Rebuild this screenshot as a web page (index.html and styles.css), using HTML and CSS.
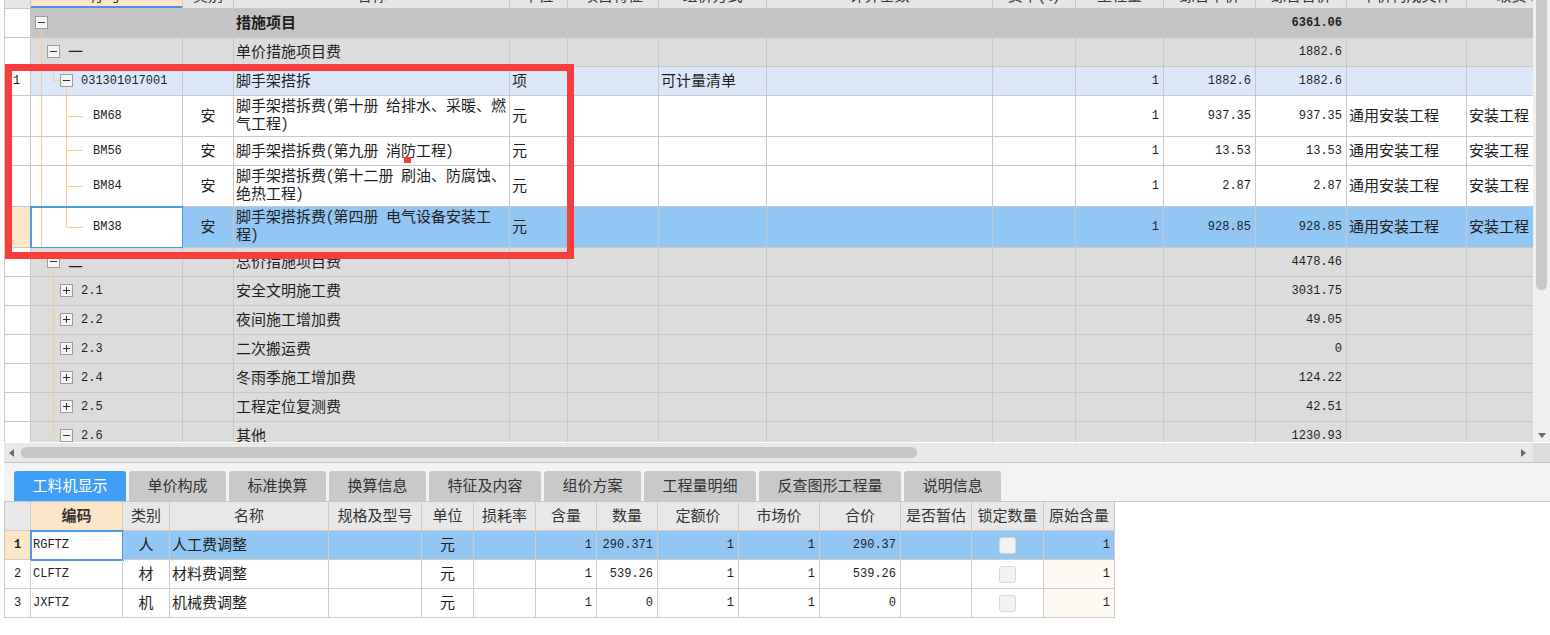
FILE: index.html
```html
<!DOCTYPE html>
<html lang="zh">
<head>
<meta charset="utf-8">
<title>措施项目</title>
<link rel="stylesheet" href="styles.css">
</head>
<body>
<div class="app">
  <div class="upper">
    <div class="view">
      <div class="sheet">
        <div class="row head">
          <div class="c"></div>
          <div class="c hl">序号</div>
          <div class="c">类别</div>
          <div class="c">名称</div>
          <div class="c">单位</div>
          <div class="c">项目特征</div>
          <div class="c">组价方式</div>
          <div class="c">计算基数</div>
          <div class="c">费率(%)</div>
          <div class="c">工程量</div>
          <div class="c">综合单价</div>
          <div class="c">综合合价</div>
          <div class="c">单价构成文件</div>
          <div class="c">取费专业</div>
        </div>

        <div class="row g0">
          <div class="c rn"></div>
          <div class="c code"><svg class="tree" width="30" height="28"><line x1="10.5" y1="19" x2="10.5" y2="28"/><use href="#bminus" x="4" y="7"/></svg></div>
          <div class="c"></div>
          <div class="c b">措施项目</div>
          <div class="c"></div><div class="c"></div><div class="c"></div><div class="c"></div><div class="c"></div><div class="c"></div><div class="c"></div>
          <div class="c num m b">6361.06</div>
          <div class="c"></div><div class="c"></div>
        </div>

        <div class="row g1">
          <div class="c rn"></div>
          <div class="c code"><svg class="tree" width="37" height="28"><line x1="10.5" y1="0" x2="10.5" y2="28"/><line x1="11" y1="13.5" x2="16" y2="13.5"/><line x1="22.5" y1="19" x2="22.5" y2="28"/><use href="#bminus" x="16" y="7"/></svg><span class="cj">一</span></div>
          <div class="c"></div>
          <div class="c">单价措施项目费</div>
          <div class="c"></div><div class="c"></div><div class="c"></div><div class="c"></div><div class="c"></div><div class="c"></div><div class="c"></div>
          <div class="c num m">1882.6</div>
          <div class="c"></div><div class="c"></div>
        </div>

        <div class="row lb">
          <div class="c rn m">1</div>
          <div class="c code"><svg class="tree" width="50" height="28"><line x1="10.5" y1="0" x2="10.5" y2="28"/><line x1="22.5" y1="0" x2="22.5" y2="13.5"/><line x1="23" y1="13.5" x2="29" y2="13.5"/><line x1="35.5" y1="19" x2="35.5" y2="28"/><use href="#bminus" x="29" y="7"/></svg><span class="m">031301017001</span></div>
          <div class="c"></div>
          <div class="c">脚手架搭拆</div>
          <div class="c">项</div>
          <div class="c"></div>
          <div class="c">可计量清单</div>
          <div class="c"></div><div class="c"></div>
          <div class="c num m">1</div>
          <div class="c num m">1882.6</div>
          <div class="c num m">1882.6</div>
          <div class="c"></div><div class="c"></div>
        </div>

        <div class="row tall wh">
          <div class="c rn"></div>
          <div class="c code"><svg class="tree" width="62" height="40"><line x1="10.5" y1="0" x2="10.5" y2="40"/><line x1="35.5" y1="0" x2="35.5" y2="40"/><line x1="36" y1="20.5" x2="52" y2="20.5"/></svg><span class="m">BM68</span></div>
          <div class="c ctr">安</div>
          <div class="c"><span class="two">脚手架搭拆费(第十册 给排水、采暖、燃<br>气工程)</span></div>
          <div class="c">元</div>
          <div class="c"></div><div class="c"></div><div class="c"></div><div class="c"></div>
          <div class="c num m">1</div>
          <div class="c num m">937.35</div>
          <div class="c num m">937.35</div>
          <div class="c">通用安装工程</div>
          <div class="c">安装工程</div>
        </div>

        <div class="row wh">
          <div class="c rn"></div>
          <div class="c code"><svg class="tree" width="62" height="28"><line x1="10.5" y1="0" x2="10.5" y2="28"/><line x1="35.5" y1="0" x2="35.5" y2="28"/><line x1="36" y1="13.5" x2="52" y2="13.5"/></svg><span class="m">BM56</span></div>
          <div class="c ctr">安</div>
          <div class="c">脚手架搭拆费(第九册 消防工程)</div>
          <div class="c">元</div>
          <div class="c"></div><div class="c"></div><div class="c"></div><div class="c"></div>
          <div class="c num m">1</div>
          <div class="c num m">13.53</div>
          <div class="c num m">13.53</div>
          <div class="c">通用安装工程</div>
          <div class="c">安装工程</div>
        </div>

        <div class="row tall wh">
          <div class="c rn"></div>
          <div class="c code"><svg class="tree" width="62" height="40"><line x1="10.5" y1="0" x2="10.5" y2="40"/><line x1="35.5" y1="0" x2="35.5" y2="40"/><line x1="36" y1="20.5" x2="52" y2="20.5"/></svg><span class="m">BM84</span></div>
          <div class="c ctr">安</div>
          <div class="c"><span class="two">脚手架搭拆费(第十二册 刷油、防腐蚀、<br>绝热工程)</span></div>
          <div class="c">元</div>
          <div class="c"></div><div class="c"></div><div class="c"></div><div class="c"></div>
          <div class="c num m">1</div>
          <div class="c num m">2.87</div>
          <div class="c num m">2.87</div>
          <div class="c">通用安装工程</div>
          <div class="c">安装工程</div>
        </div>

        <div class="row tall sel">
          <div class="c rn"></div>
          <div class="c code edit"><svg class="tree" width="62" height="40"><line x1="10.5" y1="0" x2="10.5" y2="40"/><line x1="35.5" y1="0" x2="35.5" y2="20.5"/><line x1="36" y1="20.5" x2="52" y2="20.5"/></svg><span class="m">BM38</span></div>
          <div class="c ctr">安</div>
          <div class="c"><span class="two">脚手架搭拆费(第四册 电气设备安装工<br>程)</span></div>
          <div class="c">元</div>
          <div class="c"></div><div class="c"></div><div class="c"></div><div class="c"></div>
          <div class="c num m">1</div>
          <div class="c num m">928.85</div>
          <div class="c num m">928.85</div>
          <div class="c">通用安装工程</div>
          <div class="c">安装工程</div>
        </div>

        <div class="row g1">
          <div class="c rn"></div>
          <div class="c code"><svg class="tree" width="37" height="28"><line x1="10.5" y1="0" x2="10.5" y2="13.5"/><line x1="11" y1="13.5" x2="16" y2="13.5"/><line x1="22.5" y1="19" x2="22.5" y2="28"/><use href="#bminus" x="16" y="7"/></svg><span class="cj">二</span></div>
          <div class="c"></div>
          <div class="c">总价措施项目费</div>
          <div class="c"></div><div class="c"></div><div class="c"></div><div class="c"></div><div class="c"></div><div class="c"></div><div class="c"></div>
          <div class="c num m">4478.46</div>
          <div class="c"></div><div class="c"></div>
        </div>

        <div class="row g1">
          <div class="c rn"></div>
          <div class="c code"><svg class="tree" width="50" height="28"><line x1="22.5" y1="0" x2="22.5" y2="28"/><line x1="23" y1="13.5" x2="29" y2="13.5"/><use href="#bplus" x="29" y="7"/></svg><span class="m">2.1</span></div>
          <div class="c"></div>
          <div class="c">安全文明施工费</div>
          <div class="c"></div><div class="c"></div><div class="c"></div><div class="c"></div><div class="c"></div><div class="c"></div><div class="c"></div>
          <div class="c num m">3031.75</div>
          <div class="c"></div><div class="c"></div>
        </div>

        <div class="row g1">
          <div class="c rn"></div>
          <div class="c code"><svg class="tree" width="50" height="28"><line x1="22.5" y1="0" x2="22.5" y2="28"/><line x1="23" y1="13.5" x2="29" y2="13.5"/><use href="#bplus" x="29" y="7"/></svg><span class="m">2.2</span></div>
          <div class="c"></div>
          <div class="c">夜间施工增加费</div>
          <div class="c"></div><div class="c"></div><div class="c"></div><div class="c"></div><div class="c"></div><div class="c"></div><div class="c"></div>
          <div class="c num m">49.05</div>
          <div class="c"></div><div class="c"></div>
        </div>

        <div class="row g1">
          <div class="c rn"></div>
          <div class="c code"><svg class="tree" width="50" height="28"><line x1="22.5" y1="0" x2="22.5" y2="28"/><line x1="23" y1="13.5" x2="29" y2="13.5"/><use href="#bplus" x="29" y="7"/></svg><span class="m">2.3</span></div>
          <div class="c"></div>
          <div class="c">二次搬运费</div>
          <div class="c"></div><div class="c"></div><div class="c"></div><div class="c"></div><div class="c"></div><div class="c"></div><div class="c"></div>
          <div class="c num m">0</div>
          <div class="c"></div><div class="c"></div>
        </div>

        <div class="row g1">
          <div class="c rn"></div>
          <div class="c code"><svg class="tree" width="50" height="28"><line x1="22.5" y1="0" x2="22.5" y2="28"/><line x1="23" y1="13.5" x2="29" y2="13.5"/><use href="#bplus" x="29" y="7"/></svg><span class="m">2.4</span></div>
          <div class="c"></div>
          <div class="c">冬雨季施工增加费</div>
          <div class="c"></div><div class="c"></div><div class="c"></div><div class="c"></div><div class="c"></div><div class="c"></div><div class="c"></div>
          <div class="c num m">124.22</div>
          <div class="c"></div><div class="c"></div>
        </div>

        <div class="row g1">
          <div class="c rn"></div>
          <div class="c code"><svg class="tree" width="50" height="28"><line x1="22.5" y1="0" x2="22.5" y2="28"/><line x1="23" y1="13.5" x2="29" y2="13.5"/><use href="#bplus" x="29" y="7"/></svg><span class="m">2.5</span></div>
          <div class="c"></div>
          <div class="c">工程定位复测费</div>
          <div class="c"></div><div class="c"></div><div class="c"></div><div class="c"></div><div class="c"></div><div class="c"></div><div class="c"></div>
          <div class="c num m">42.51</div>
          <div class="c"></div><div class="c"></div>
        </div>

        <div class="row g1">
          <div class="c rn"></div>
          <div class="c code"><svg class="tree" width="50" height="28"><line x1="22.5" y1="0" x2="22.5" y2="13.5"/><line x1="23" y1="13.5" x2="29" y2="13.5"/><line x1="35.5" y1="19" x2="35.5" y2="28"/><use href="#bminus" x="29" y="7"/></svg><span class="m">2.6</span></div>
          <div class="c"></div>
          <div class="c">其他</div>
          <div class="c"></div><div class="c"></div><div class="c"></div><div class="c"></div><div class="c"></div><div class="c"></div><div class="c"></div>
          <div class="c num m">1230.93</div>
          <div class="c"></div><div class="c"></div>
        </div>
      </div>
      <div class="annot"></div>
      <div class="caret"></div>
    </div>
    <div class="vscroll">
      <div class="vthumb"></div>
      <div class="arr-down"></div>
    </div>
  </div>

  <div class="hscroll">
    <div class="arr-left"></div>
    <div class="hthumb"></div>
    <div class="hspace"></div>
    <div class="arr-right"></div>
    <div class="corner"></div>
  </div>

  <div class="tabs">
    <div class="tab on">工料机显示</div>
    <div class="tab">单价构成</div>
    <div class="tab">标准换算</div>
    <div class="tab">换算信息</div>
    <div class="tab">特征及内容</div>
    <div class="tab">组价方案</div>
    <div class="tab">工程量明细</div>
    <div class="tab">反查图形工程量</div>
    <div class="tab">说明信息</div>
  </div>

  <div class="bgrid">
    <div class="brow head">
      <div class="c"></div>
      <div class="c hl2">编码</div>
      <div class="c">类别</div>
      <div class="c">名称</div>
      <div class="c">规格及型号</div>
      <div class="c">单位</div>
      <div class="c">损耗率</div>
      <div class="c">含量</div>
      <div class="c">数量</div>
      <div class="c">定额价</div>
      <div class="c">市场价</div>
      <div class="c">合价</div>
      <div class="c">是否暂估</div>
      <div class="c">锁定数量</div>
      <div class="c">原始含量</div>
    </div>
    <div class="brow sel">
      <div class="c rn m b">1</div>
      <div class="c edit m">RGFTZ</div>
      <div class="c ctr">人</div>
      <div class="c">人工费调整</div>
      <div class="c"></div>
      <div class="c ctr">元</div>
      <div class="c"></div>
      <div class="c num m">1</div>
      <div class="c num m">290.371</div>
      <div class="c num m">1</div>
      <div class="c num m">1</div>
      <div class="c num m">290.37</div>
      <div class="c"></div>
      <div class="c ctr box"><span class="cb"></span></div>
      <div class="c num m">1</div>
    </div>
    <div class="brow">
      <div class="c rn m">2</div>
      <div class="c m">CLFTZ</div>
      <div class="c ctr">材</div>
      <div class="c">材料费调整</div>
      <div class="c"></div>
      <div class="c ctr">元</div>
      <div class="c"></div>
      <div class="c num m">1</div>
      <div class="c num m">539.26</div>
      <div class="c num m">1</div>
      <div class="c num m">1</div>
      <div class="c num m">539.26</div>
      <div class="c"></div>
      <div class="c ctr box"><span class="cb"></span></div>
      <div class="c num m orig">1</div>
    </div>
    <div class="brow">
      <div class="c rn m">3</div>
      <div class="c m">JXFTZ</div>
      <div class="c ctr">机</div>
      <div class="c">机械费调整</div>
      <div class="c"></div>
      <div class="c ctr">元</div>
      <div class="c"></div>
      <div class="c num m">1</div>
      <div class="c num m">0</div>
      <div class="c num m">1</div>
      <div class="c num m">1</div>
      <div class="c num m">0</div>
      <div class="c"></div>
      <div class="c ctr box"><span class="cb"></span></div>
      <div class="c num m orig">1</div>
    </div>
  </div>
</div>

<svg class="defs" width="0" height="0" aria-hidden="true">
  <symbol id="bminus" viewBox="0 0 13 13" width="13" height="13">
    <rect x="0.5" y="0.5" width="12" height="12" fill="#f6f6f6" stroke="#9c9c9c"/>
    <line x1="3" y1="6.5" x2="10" y2="6.5" stroke="#333"/>
  </symbol>
  <symbol id="bplus" viewBox="0 0 13 13" width="13" height="13">
    <rect x="0.5" y="0.5" width="12" height="12" fill="#f6f6f6" stroke="#9c9c9c"/>
    <line x1="3" y1="6.5" x2="10" y2="6.5" stroke="#333"/>
    <line x1="6.5" y1="3" x2="6.5" y2="10" stroke="#333"/>
  </symbol>
</svg>
</body>
</html>
```

FILE: styles.css
```css
* { box-sizing: border-box; }

html, body {
  margin: 0;
  background: #fff;
}

body {
  width: 1550px;
  height: 635px;
  overflow: hidden;
  font-family: "Noto Sans CJK SC", "Noto Sans", sans-serif;
  font-size: 15px;
  font-feature-settings: "hwid" 1;
  color: #1e1e1e;
}

.app {
  margin-left: 4px;
}

/* ---------- upper grid ---------- */
.upper {
  display: flex;
  height: 442px;
}

.view {
  position: relative;
  flex: 1;
  min-width: 0;
  overflow: hidden;
  border-left: 1px solid #c6c6c6;
}

.sheet {
  margin-top: -17px;
}

.row {
  display: grid;
  grid-template-columns: 26px 152px 51px 276px 58px 91px 108px 226px 83px 88px 92px 91px 120px 120px;
  height: 29px;
}

.row.tall { height: 41px; }

.c {
  display: flex;
  align-items: center;
  min-width: 0;
  height: 100%;
  padding-left: 2px;
  padding-bottom: 4px;
  overflow: hidden;
  white-space: nowrap;
  border-right: 1px solid #c8c8c8;
  border-bottom: 1px solid #c8c8c8;
}

.row.head {
  height: 26px;
  background: #e6e6e6;
}

.head .c {
  justify-content: center;
  padding: 0 0 2px;
  color: #333;
}

.hl {
  background: #fde6c8;
  box-shadow: inset 0 -2px 0 #4a92e0;
}

.m {
  font-family: "Liberation Mono", "DejaVu Sans Mono", monospace;
  font-size: 12px;
}

.c.m, .c.num, .c.code, .c.box { padding-bottom: 0; }

.b { font-weight: bold; }

.num {
  justify-content: flex-end;
  padding-left: 0;
  padding-right: 4px;
}

.ctr {
  justify-content: center;
  padding-left: 0;
}

.rn {
  background: #fff;
  padding-left: 8px;
}

.g0 .c:not(.rn) { background: #c4c4c4; }
.g1 .c:not(.rn) { background: #dcdcdc; }
.lb .c:not(.rn) { background: #dce8fa; }
.sel .c:not(.rn) { background: #92c6f3; }
.sel .rn { background: #fde5c7; }

.c.edit {
  background: #fff !important;
  outline: 2px solid #4d9be8;
  outline-offset: -1px;
}

.code {
  padding-left: 0;
}

.cj { margin-bottom: 4px; }

.tree {
  display: block;
  flex: none;
  stroke: #f9cd92;
  stroke-width: 1;
}

.two {
  display: block;
  line-height: 18px;
}

.annot {
  position: absolute;
  left: 0;
  top: 64px;
  width: 569px;
  height: 195px;
  border: 7px solid #f93c3c;
  pointer-events: none;
}

.caret {
  position: absolute;
  left: 399px;
  top: 157px;
  width: 7px;
  height: 6px;
  background: #f93c3c;
}

/* vertical scrollbar */
.vscroll {
  width: 17px;
  flex: none;
  background: #f0f0f0;
  display: flex;
  flex-direction: column;
  align-items: center;
  justify-content: space-between;
}

.vthumb {
  width: 11px;
  height: 290px;
  border-radius: 0 0 6px 6px;
  background: #c9c9c9;
}

.arr-down {
  width: 0;
  height: 0;
  margin-bottom: 4px;
  border-left: 4px solid transparent;
  border-right: 4px solid transparent;
  border-top: 5px solid #6a6a6a;
}

/* horizontal scrollbar */
.hscroll {
  display: flex;
  align-items: center;
  height: 21px;
  background: #e8e8e8;
  border-top: 1px solid #fff;
  border-bottom: 1px solid #c6c6c6;
}

.arr-left {
  width: 0;
  height: 0;
  margin: 0 7px 0 5px;
  border-top: 4px solid transparent;
  border-bottom: 4px solid transparent;
  border-right: 5px solid #6a6a6a;
}

.hthumb {
  width: 896px;
  height: 11px;
  border-radius: 6px;
  background: #c6c6c6;
}

.hspace { flex: 1; }

.arr-right {
  width: 0;
  height: 0;
  margin-right: 7px;
  border-top: 4px solid transparent;
  border-bottom: 4px solid transparent;
  border-left: 5px solid #6a6a6a;
}

.corner {
  width: 17px;
  align-self: stretch;
  background: #dcdcdc;
}

/* tabs */
.tabs {
  display: flex;
  align-items: flex-end;
  gap: 3px;
  height: 39px;
  padding-left: 10px;
  background: #f3f3f3;
  border-bottom: 1px solid #c6c6c6;
}

.tab {
  display: flex;
  align-items: center;
  height: 30px;
  padding: 0 18.5px 3px;
  border-radius: 3px 3px 0 0;
  background: #c9c9c9;
  color: #333;
  font-size: 15px;
}

.tab.on {
  background: #3f9ef6;
  color: #fff;
}

/* lower grid */
.bgrid {
  width: max-content;
  border-left: 1px solid #c6c6c6;
}

.brow {
  display: grid;
  grid-template-columns: 26px 92px 47px 159px 93px 52px 62px 61px 61px 81px 81px 81px 71px 72px 71px;
  height: 29px;
}

.brow .c { border-color: #cdcdcd; }

.brow.head { background: #e8e8e8; }

.brow.head .c {
  justify-content: center;
  padding: 0 0 4px;
  color: #333;
}

.hl2 {
  background: #fde6c8;
  font-weight: bold;
}

.brow .rn { padding-left: 9px; }

.orig { background: #fdf9f2; }

.cb {
  display: block;
  width: 17px;
  height: 17px;
  border: 1px solid #d6d6d6;
  border-radius: 3px;
  background: #f2f2f2;
}

.defs {
  display: block;
  width: 0;
  height: 0;
  overflow: hidden;
}
```
